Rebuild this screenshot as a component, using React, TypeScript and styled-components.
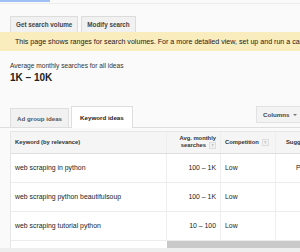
import React from "react";
import styled, { createGlobalStyle } from "styled-components";

const Global = createGlobalStyle`
  html, body { margin: 0; padding: 0; background: #fafafa; }
  body { font-family: "Liberation Sans", Arial, sans-serif; color: #222; width: 300px; height: 252px; overflow: hidden; }
`;

const Page = styled.div`
  width: 300px;
  height: 252px;
  overflow: hidden;
  display: flex;
  flex-direction: column;
`;

const TopStrip = styled.div`
  height: 3px;
  border-bottom: 1px solid #ececec;
  display: flex;
`;

const TopIndicator = styled.div`
  width: 50px;
  height: 2px;
  background: #9fc0f5;
`;

const ButtonRow = styled.div`
  display: flex;
  gap: 3px;
  padding: 12px 10px 0;
`;

const Button = styled.div`
  height: 16px;
  padding: 0 5px;
  display: flex;
  align-items: center;
  background: #f1f1f1;
  border: 1px solid #dcdcdc;
  border-bottom: none;
  box-sizing: border-box;
  font-size: 6.3px;
  font-weight: bold;
  color: #444;
  border-radius: 1px 1px 0 0;
`;

const Banner = styled.div`
  height: 19px;
  background: #f9edbe;
  display: flex;
  align-items: center;
  padding-left: 15px;
  font-size: 7.1px;
  color: #222;
  white-space: nowrap;
  overflow: hidden;
`;

const Summary = styled.div`
  padding: 11px 10px 0;
  display: flex;
  flex-direction: column;
  gap: 3px;
`;

const SummaryLabel = styled.div`
  font-size: 6.6px;
  color: #333;
`;

const SummaryValue = styled.div`
  font-size: 10px;
  font-weight: bold;
  color: #222;
`;

const TabBar = styled.div`
  margin-top: 22px;
  height: 22px;
  display: flex;
  align-items: flex-end;
  padding-left: 10px;
  gap: 2px;
  border-bottom: 1px solid #dedede;
`;

const Tab = styled.div<{ $active?: boolean }>`
  height: ${(p) => (p.$active ? "22px" : "19px")};
  padding: 0 ${(p) => (p.$active ? 8 : 6)}px;
  display: flex;
  align-items: center;
  font-size: 6.2px;
  font-weight: bold;
  color: ${(p) => (p.$active ? "#222" : "#555")};
  background: ${(p) => (p.$active ? "#fff" : "#f1f1f1")};
  border: 1px solid #dedede;
  border-bottom: none;
  box-sizing: border-box;
  margin-bottom: ${(p) => (p.$active ? "-1px" : "0")};
`;

const ColumnsButton = styled.div`
  margin-left: auto;
  margin-bottom: 4px;
  height: 17px;
  width: 44px;
  box-sizing: border-box;
  background: #f3f3f3;
  border: 1px solid #e2e2e2;
  border-right: none;
  display: flex;
  align-items: center;
  padding-left: 6px;
  gap: 4px;
  font-size: 6.2px;
  font-weight: bold;
  color: #444;
`;

const Caret = styled.span`
  width: 0;
  height: 0;
  border-left: 2px solid transparent;
  border-right: 2px solid transparent;
  border-top: 2px solid #777;
`;

const TableWrap = styled.div`
  margin: 3px 0 0 10px;
  width: 320px;
  background: #fff;
  border-left: 1px solid #e6e6e6;
  border-top: 1px solid #e6e6e6;
`;

const Row = styled.div<{ $header?: boolean }>`
  display: grid;
  grid-template-columns: 156px 54px 55px 55px;
  height: ${(p) => (p.$header ? "22px" : "29px")};
  background: ${(p) => (p.$header ? "#f5f5f5" : "#fff")};
  border-bottom: 1px solid ${(p) => (p.$header ? "#dedede" : "#ececec")};
  box-sizing: border-box;
`;

const Cell = styled.div<{ $right?: boolean; $header?: boolean; $last?: boolean; $indent?: number }>`
  display: flex;
  align-items: center;
  justify-content: ${(p) => (p.$right ? "flex-end" : "flex-start")};
  text-align: ${(p) => (p.$right ? "right" : "left")};
  padding: ${(p) => (p.$header ? "0" : "1px")} 4px 0 ${(p) => p.$indent ?? 4}px;
  border-right: ${(p) => (p.$last ? "none" : "1px solid #eeeeee")};
  font-size: ${(p) => (p.$header ? "5.8px" : "6.9px")};
  font-weight: ${(p) => (p.$header ? "bold" : "normal")};
  color: ${(p) => (p.$header ? "#333" : "#222")};
  line-height: 1.25;
  white-space: nowrap;
  overflow: hidden;
`;

const Help = styled.span`
  display: inline-block;
  width: 5px;
  height: 5px;
  border: 1px solid #ddd;
  background: #f3f3f3;
  color: #aaa;
  font-size: 4px;
  line-height: 5px;
  text-align: center;
  margin-left: 3px;
  vertical-align: middle;
`;

const ScrollRow = styled.div`
  display: grid;
  grid-template-columns: 156px 1fr;
  height: 7px;
  background: #fff;
`;

const ScrollThumb = styled.div`
  background: #c9c9c9;
`;

const Bottom = styled.div`
  flex: 1;
  background: #eeeeee;
`;

const rows = [
  { kw: "web scraping in python", avg: "100 – 1K", comp: "Low", sugg: "P" },
  { kw: "web scraping python beautifulsoup", avg: "100 – 1K", comp: "Low", sugg: "" },
  { kw: "web scraping tutorial python", avg: "10 – 100", comp: "Low", sugg: "" },
];

export default function App() {
  return (
    <Page>
      <Global />
      <TopStrip>
        <TopIndicator />
      </TopStrip>
      <ButtonRow>
        <Button>Get search volume</Button>
        <Button>Modify search</Button>
      </ButtonRow>
      <Banner>
        This page shows ranges for search volumes. For a more detailed view, set up and run a campaign.
      </Banner>
      <Summary>
        <SummaryLabel>Average monthly searches for all ideas</SummaryLabel>
        <SummaryValue>1K – 10K</SummaryValue>
      </Summary>
      <TabBar>
        <Tab>Ad group ideas</Tab>
        <Tab $active>Keyword ideas</Tab>
        <ColumnsButton>
          Columns <Caret />
        </ColumnsButton>
      </TabBar>
      <TableWrap>
        <Row $header>
          <Cell $header>Keyword (by relevance)</Cell>
          <Cell $header $right>
            <span>
              Avg. monthly
              <br />
              searches<Help>?</Help>
            </span>
          </Cell>
          <Cell $header>
            Competition<Help>?</Help>
          </Cell>
          <Cell $header $last $indent={10}>Sugg</Cell>
        </Row>
        {rows.map((r) => (
          <Row key={r.kw}>
            <Cell>{r.kw}</Cell>
            <Cell $right>{r.avg}</Cell>
            <Cell>{r.comp}</Cell>
            <Cell $last $indent={20}>{r.sugg}</Cell>
          </Row>
        ))}
        <ScrollRow>
          <div />
          <ScrollThumb />
        </ScrollRow>
      </TableWrap>
      <Bottom />
    </Page>
  );
}
